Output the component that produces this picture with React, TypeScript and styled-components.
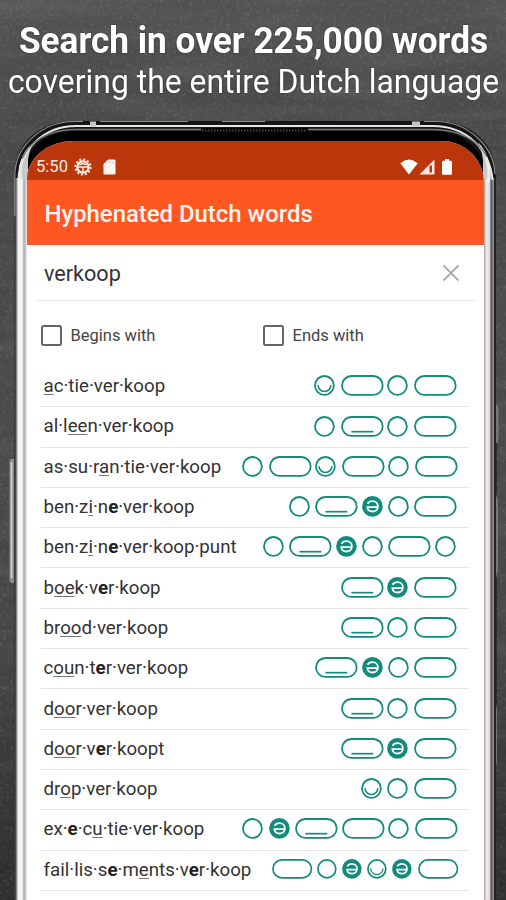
import React from 'react';
import styled, { createGlobalStyle, css } from 'styled-components';

const TEAL = '#128b7c';

const GlobalStyle = createGlobalStyle`
  * { box-sizing: border-box; }
  body { margin: 0; background: #4b4b4b; font-family: Roboto, "Liberation Sans", sans-serif; }
`;

const Page = styled.div`
  position: relative;
  width: 506px;
  height: 900px;
  overflow: hidden;
  background: linear-gradient(180deg, #525252 0%, #474747 18%, #494949 48%, #444 72%, #2c2a2a 100%);
`;

const Backdrop = styled.svg`
  position: absolute;
  inset: 0;
  width: 100%;
  height: 100%;
`;

const Headline = styled.header`
  position: relative;
  height: 141px;
  padding-top: 21px;
  color: #fff;
  text-align: center;
  white-space: nowrap;
  text-shadow: 0 0 2px rgba(0, 0, 0, 0.45);
`;

const HeadlineStrong = styled.div`
  padding-left: 1px;
  font-size: 35.2px;
  font-weight: 700;
  line-height: 41px;
  transform: scaleY(1.04);
`;

const HeadlineLight = styled.div`
  padding-left: 1px;
  font-size: 31.9px;
  line-height: 41px;
  transform: scaleY(1.04);
`;

const Screen = styled.main`
  position: relative;
  width: 457px;
  height: 759px;
  margin-left: 27px;
  overflow: hidden;
  border-radius: 46px 42px 0 0 / 38px 42px 0 0;
  background: #fff;
`;

const StatusBar = styled.div`
  display: flex;
  align-items: center;
  height: 39px;
  padding: 12px 32px 0 9px;
  background: #bc360c;
  color: #ffeae4;
  font-size: 16.6px;
  line-height: 20px;
`;

const StatusIcon = styled.svg<{ $gap: number }>`
  display: block;
  flex: none;
  margin-left: ${(p) => p.$gap}px;
`;

const Spacer = styled.div`
  flex: 1;
`;

const AppBar = styled.div`
  display: flex;
  align-items: center;
  height: 65px;
  padding: 3px 17px 0 17.5px;
  background: #ff5722;
  border-bottom: 1px solid #e9572b;
  color: #fff3ef;
  font-size: 23.9px;
  font-weight: 500;
`;

const SearchField = styled.div`
  display: flex;
  align-items: center;
  justify-content: space-between;
  height: 56px;
  margin: 0 8px 0 9px;
  padding: 1px 16px 0 8px;
  border-bottom: 1.5px solid #ececec;
  color: #333;
  font-size: 21.6px;
`;

const Filters = styled.div`
  display: grid;
  grid-template-columns: 222px 1fr;
  align-items: center;
  height: 66px;
  padding: 2px 0 0 14px;
`;

const Filter = styled.label`
  display: flex;
  align-items: center;
  gap: 8.5px;
  color: #444;
  font-size: 16.5px;
`;

const Box = styled.span`
  width: 21px;
  height: 21px;
  border: 2px solid #666;
  border-radius: 2.5px;
`;

const WordList = styled.ul`
  margin: 0 15px 0 14px;
  padding: 0;
  list-style: none;
`;

const WordRow = styled.li<{ $end: number }>`
  display: flex;
  align-items: center;
  justify-content: space-between;
  height: 40.3px;
  padding: 0 ${(p) => p.$end}px 1px 2.5px;
  border-bottom: 1.5px solid #e4e4e4;
  white-space: nowrap;
`;

const Word = styled.span<{ $width: number }>`
  color: #333;
  font-size: 18.7px;
  line-height: 22px;
  width: ${(p) => p.$width}px;
`;

const Stressed = styled.span`
  text-decoration: underline 1px #777;
  text-underline-offset: 2px;
  text-decoration-skip-ink: none;
`;

const Schwa = styled.b`
  font-weight: 700;
  color: #222;
`;

const Glyphs = styled.span`
  display: flex;
  flex: none;
  padding-bottom: 1px;
`;

const afterLong = css`margin-right: 4px;`;
const afterShort = css`margin-right: 5.5px;`;

const Glyph = styled.svg<{ $long: boolean }>`
  display: block;
  overflow: visible;
  ${(p) => (p.$long ? afterLong : afterShort)}
  &:last-child { margin-right: 0; }
`;

/* o short, u short stressed, e schwa, l long, s long stressed */
type Kind = 'o' | 'u' | 'e' | 'l' | 's';

function SyllableGlyph({ kind, scale }: { kind: Kind; scale: number }) {
  const long = kind === 'l' || kind === 's';
  const w = long ? 43 : 21;
  return (
    <Glyph $long={long} width={w * scale} height={21 * scale} viewBox={`0 0 ${w} 21`} fill="none" stroke={TEAL} strokeWidth="1.8">
      <rect x="1" y="1" width={w - 2} height="19" rx="9.5" fill={kind === 'e' ? TEAL : 'none'} />
      {kind === 's' && <path d="M10.500 15.800H32.500" strokeWidth="1.7" />}
      {kind === 'u' && <path d="M4 10.200C4.200 13.800 6.900 16.600 10.500 16.600S16.800 13.800 17 10.200" strokeWidth="1.500" />}
      {kind === 'e' && (
        <path
          d="M5.600 7.800C6.500 6 8.300 5.200 10.600 5.200C13.800 5.200 16 7.500 16 10.400C16 13.400 13.700 15.600 10.700 15.600C7.800 15.600 5.600 13.900 5.400 11.300H15"
          stroke="#fff"
          strokeWidth="1.8"
        />
      )}
    </Glyph>
  );
}

interface Entry { text: string; kinds: string; width: number; end: number; scale?: number }

/* In text, _x_ marks the stressed vowel and *x* the schwa. */
const entries: Entry[] = [
  { text: '_a_c·tie·ver·koop', kinds: 'ulol', width: 122, end: 12.5 },
  { text: 'al·l_ee_n·ver·koop', kinds: 'osol', width: 130, end: 12.5 },
  { text: 'as·su·r_a_n·tie·ver·koop', kinds: 'olulol', width: 178, end: 11.5 },
  { text: 'ben·z_i_·n*e*·ver·koop', kinds: 'oseol', width: 151, end: 12 },
  { text: 'ben·z_i_·n*e*·ver·koop·punt', kinds: 'oseolo', width: 193, end: 13 },
  { text: 'b_oe_k·v*e*r·koop', kinds: 'sel', width: 117, end: 12.5 },
  { text: 'br_oo_d·ver·koop', kinds: 'sol', width: 125, end: 12.5 },
  { text: 'c_ou_n·t*e*r·ver·koop', kinds: 'seol', width: 145, end: 12 },
  { text: 'd_oo_r·ver·koop', kinds: 'sol', width: 114, end: 12.5 },
  { text: 'd_oo_r·v*e*r·koopt', kinds: 'sel', width: 121, end: 12.5 },
  { text: 'dr_o_p·ver·koop', kinds: 'uol', width: 114, end: 12.5 },
  { text: 'ex·*e*·c_u_·tie·ver·koop', kinds: 'oeslol', width: 161, end: 11.5 },
  { text: 'fail·lis·s*e*·m_e_nts·v*e*r·koop', kinds: 'loeuel', width: 209, end: 11, scale: 0.94 },
];

function Hyphenated({ text }: { text: string }) {
  return (
    <>
      {text.split(/(_[^_]+_|\*[^*]+\*)/).map((part, i) => {
        if (part.startsWith('_')) return <Stressed key={i}>{part.slice(1, -1)}</Stressed>;
        if (part.startsWith('*')) return <Schwa key={i}>{part.slice(1, -1)}</Schwa>;
        return part;
      })}
    </>
  );
}

function Chalkboard() {
  return (
    <Backdrop viewBox="0 0 506 900" aria-hidden="true">
      <defs>
        <filter id="smear" x="0" y="0" width="100%" height="100%">
          <feTurbulence type="fractalNoise" baseFrequency="0.006 0.05" numOctaves="3" seed="4" />
          <feColorMatrix values="0 0 0 0 1  0 0 0 0 1  0 0 0 0 1  0.5 0 0 0 -0.19" />
        </filter>
        <filter id="grain" x="0" y="0" width="100%" height="100%">
          <feTurbulence type="fractalNoise" baseFrequency="0.3" numOctaves="2" seed="9" />
          <feColorMatrix values="0 0 0 0 1  0 0 0 0 1  0 0 0 0 1  1 0 0 0 -0.55" />
        </filter>
      </defs>
      <rect width="506" height="900" filter="url(#smear)" opacity="0.3" />
      <rect width="506" height="900" filter="url(#grain)" opacity="0.35" />
    </Backdrop>
  );
}

function PhoneBody() {
  return (
    <Backdrop viewBox="0 0 506 900" fill="none" aria-hidden="true">
      <defs>
        <linearGradient id="left" x1="14" x2="27" y1="0" y2="0" gradientUnits="userSpaceOnUse">
          <stop offset="0" stopColor="#333" />
          <stop offset=".14" stopColor="#4c4c4c" />
          <stop offset=".24" stopColor="#b5b5b5" />
          <stop offset=".34" stopColor="#f4f4f4" />
          <stop offset=".64" stopColor="#f2f2f2" />
          <stop offset=".76" stopColor="#aaa" />
          <stop offset=".9" stopColor="#ccc" />
          <stop offset="1" stopColor="#eee" />
        </linearGradient>
        <linearGradient id="right" x1="483" x2="496" y1="0" y2="0" gradientUnits="userSpaceOnUse">
          <stop offset="0" stopColor="#b89a98" />
          <stop offset=".15" stopColor="#c4b0ae" />
          <stop offset=".25" stopColor="#ededed" />
          <stop offset=".52" stopColor="#ddd" />
          <stop offset=".6" stopColor="#666" />
          <stop offset=".7" stopColor="#555" />
          <stop offset=".78" stopColor="#bbb" />
          <stop offset=".88" stopColor="#222" />
          <stop offset="1" stopColor="#222" />
        </linearGradient>
      </defs>
      {/* side keys */}
      <path d="M9.500 460q0-1 1-1H15V583H12q-2 0-2.500-2z" fill="#8b8b8b" />
      <path d="M11.500 462V578" stroke="#d8d8d8" strokeWidth="1.500" />
      <path d="M494 405h3.500l1 4v30l-1 4H494zM494 495h2l2 6v70l-2 6H494zM494 705h2l1 5v52l-1 5H494zM494 799h2v28h-2z" fill="#777" />
      <path d="M495 443V495M495 577V705" stroke="#161616" strokeWidth="3" />
      {/* metal rim and glass */}
      <path d="M14 900V178C14 143 39 121 76 121H436C471 121 496 143 496 178V900Z" fill="#151515" />
      <path d="M24 178C26 146 46 131 77 131H432C462 131 484 148 487 178Z" fill="#000" />
      <path d="M14 900V178H27V900Z" fill="url(#left)" />
      <path d="M483 900V178H496V900Z" fill="url(#right)" />
      <path d="M28 179V160Q29 151 33 144Q20 154 18 179ZM483 179V160Q482 150 478 142Q490 154 491.500 179Z" fill="#c9c9c9" />
      <path d="M20.500 182V166Q23 155 30 147M488.500 182V168Q487 156 480 147" stroke="#eee" strokeWidth="2.500" />
      <path d="M14.800 216V174C16 145 43 121.500 74 121.500H83M100 121.500H188M222 121.500H265M424 121.500H437C469 122 494 147 495 174" stroke="#8e8e8e" strokeWidth="1.200" />
      <path d="M18.500 180C19 151 43 126 76 126H433C466 126 490 149 492.500 180" stroke="#e6e6e6" strokeWidth="2" />
      <path d="M22 159C29 142 48 129.500 76 129.500H432C459 129.500 478 140 487 157" stroke="#777" strokeWidth="1.300" />
      <path d="M90 121.500h6v5h-6zM412 121.500h8v5h-8z" fill="#c6c6c6" />
      <path d="M201 130H308" stroke="#000" strokeWidth="4" />
      <path d="M202 130.500H307" stroke="#444" strokeWidth="2" strokeDasharray="1.500 1.500" />
    </Backdrop>
  );
}

export default function App() {
  return (
    <Page>
      <GlobalStyle />
      <Chalkboard />
      <PhoneBody />
      <Headline>
        <HeadlineStrong>Search in over 225,000 words</HeadlineStrong>
        <HeadlineLight>covering the entire Dutch language</HeadlineLight>
      </Headline>
      <Screen>
        <StatusBar>
          5:50
          <StatusIcon $gap={6} width="18" height="18" viewBox="0 0 18 18" fill="none" stroke="#ffeae4">
            <circle cx="9" cy="9" r="5.700" strokeWidth="2.200" />
            <circle cx="9" cy="9" r="7.600" strokeWidth="2" strokeDasharray="2 1.979" />
            <path d="M4 9H14M9 9V14M5.500 6.800Q9 4.500 12.500 6.800" strokeWidth="1.500" />
          </StatusIcon>
          <StatusIcon $gap={10.5} width="13" height="16" viewBox="0 0 13 16" fill="#fff5f1">
            <path d="M5 .5H11.500Q12.500 .5 12.500 1.500V14.500Q12.500 15.500 11.500 15.500H1.500Q.5 15.500 .5 14.500V5Z" />
            <path d="M5 2.500v2M7.500 2.500v2M10 2.500v2" stroke="#e9b3a2" />
          </StatusIcon>
          <Spacer />
          <StatusIcon $gap={0} width="18" height="16" viewBox="0 0 18 16" fill="#fff">
            <path d="M9 15.500L.3 4.200Q9-3 17.700 4.200Z" />
          </StatusIcon>
          <StatusIcon $gap={1} width="16" height="16" viewBox="0 0 16 16" fill="#ffe9e2">
            <path d="M.5 15.500L15.500 .5V15.500Z" />
            <path d="M10.500 6.500H13V13.500H10.500Z" fill="#bc360c" />
          </StatusIcon>
          <StatusIcon $gap={7} width="10" height="16" viewBox="0 0 10 16" fill="#fff">
            <path d="M3 0H7V1.800H8.800Q10 1.800 10 3V14.500Q10 15.700 8.800 15.700H1.200Q0 15.700 0 14.500V3Q0 1.800 1.200 1.800H3Z" />
          </StatusIcon>
        </StatusBar>
        <AppBar>Hyphenated Dutch words</AppBar>
        <SearchField>
          verkoop
          <svg width="18" height="18" viewBox="0 0 18 18" stroke="#aaa" strokeWidth="1.800">
            <path d="M1.500 1.500L16.500 16.500M16.500 1.500L1.500 16.500" />
          </svg>
        </SearchField>
        <Filters>
          <Filter><Box />Begins with</Filter>
          <Filter><Box />Ends with</Filter>
        </Filters>
        <WordList>
          {entries.map((e) => (
            <WordRow key={e.text} $end={e.end}>
              <Word $width={e.width}><Hyphenated text={e.text} /></Word>
              <Glyphs>
                {e.kinds.split('').map((k, i) => (
                  <SyllableGlyph key={i} kind={k as Kind} scale={e.scale ?? 0.993} />
                ))}
              </Glyphs>
            </WordRow>
          ))}
        </WordList>
      </Screen>
    </Page>
  );
}
